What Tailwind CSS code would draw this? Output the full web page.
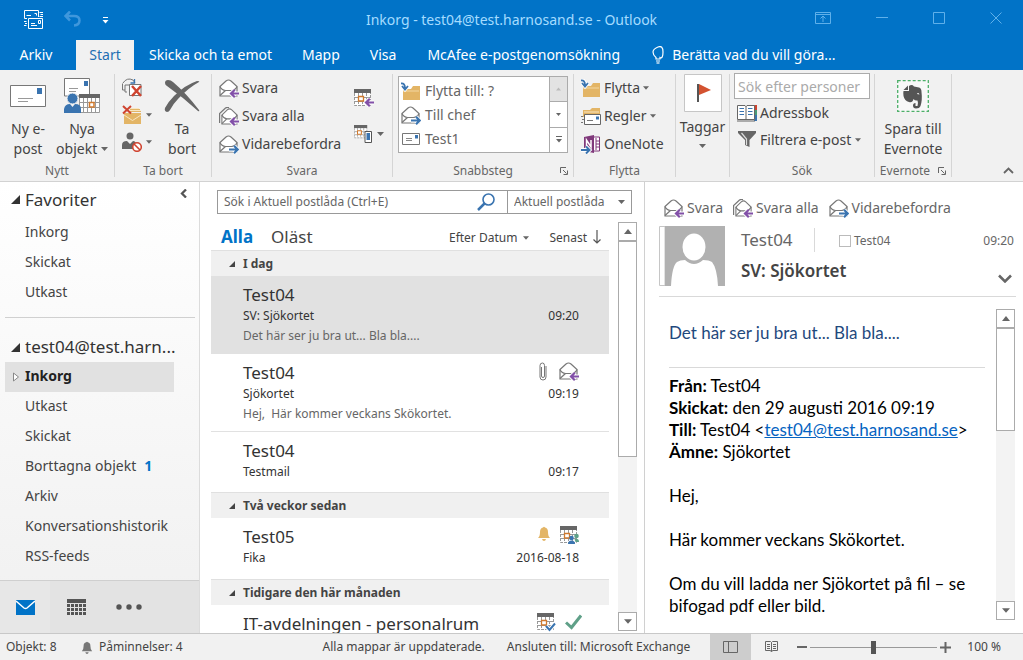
<!DOCTYPE html>
<html lang="sv">
<head>
<meta charset="utf-8">
<title>Inkorg - Outlook</title>
<script src="https://cdn.jsdelivr.net/npm/@tailwindcss/browser@4"></script>
</head>
<body class="h-screen overflow-hidden flex flex-col bg-white text-[#444] font-['Noto_Sans','Open_Sans',sans-serif] text-[14px] leading-5">
<svg class="hidden" xmlns="http://www.w3.org/2000/svg">
  <symbol id="open-mail" viewBox="0 0 20 19"><path d="M1 7.500 7 2Q9.500 0 12 2L18 7.500V17H1Z" fill="#fff" stroke="#777" stroke-width="1.200"/><path d="M1 7.500Q2.500 11 6.500 11.500H12.500Q16.500 11 18 7.500M1 16.500 6.500 11.500" fill="none" stroke="#777" stroke-width="1.200"/></symbol>
  <symbol id="arrow-l" viewBox="0 0 20 19"><path d="M20 14.500H12.500M15.500 10.800 12 14.500 15.500 18.200" fill="none" stroke="#fff" stroke-width="4"/><path d="M20 14.500H12.500M15.800 10.800 12 14.500 15.800 18.200" fill="none" stroke="#8250a8" stroke-width="2.200"/></symbol>
  <symbol id="reply" viewBox="0 0 20 19"><use href="#open-mail" width="20" height="19"/><use href="#arrow-l" width="20" height="19"/></symbol>
  <symbol id="reply-all" viewBox="0 0 20 19"><path d="M.6 16V6.500L6.500 1Q8 0 10 .6" fill="none" stroke="#777" stroke-width="1.200"/><svg x="2" y="1" width="17" height="17" viewBox="0 0 19 18" preserveAspectRatio="none"><use href="#open-mail" width="20" height="19"/></svg><use href="#arrow-l" width="20" height="19"/></symbol>
  <symbol id="forward" viewBox="0 0 20 19"><use href="#open-mail" width="20" height="19"/><path d="M10 14.500H18M15 10.800 18.700 14.500 15 18.200" fill="none" stroke="#fff" stroke-width="4"/><path d="M10 14.500H18M15 10.800 18.700 14.500 15 18.200" fill="none" stroke="#3a74b0" stroke-width="2.200"/></symbol>
  <symbol id="cal" viewBox="0 0 18 18"><path d="M.5 3.500H16.500V16.500H.5Z" fill="#fff"/><path d="M.5 4V16.500H16.500V4M4.500 4V16M8.500 4V16M12.500 4V16M1 8.500H16M1 12.500H16" fill="none" stroke="#999" stroke-width="1" stroke-dasharray="3 1"/><path d="M0 0H17V4H0Z" fill="#666"/><path d="M4.500 7.500H9.500V12H4.500Z" fill="#fff" stroke="#d07a2e" stroke-width="1.300"/></symbol>
  <symbol id="folder-move" viewBox="0 0 20 19"><path d="M2 7H10L12 4H19V18H2Z" fill="#e3b566"/><path d="M2 9H18" stroke="#f3d7a2"/><path d="M0 1Q4 1 4 5M1 4 4 7.500 7 4" fill="none" stroke="#fff" stroke-width="3.500"/><path d="M0 1.500Q4 1 4 6M1 4 4 7.500 7 4" fill="none" stroke="#3a74b0" stroke-width="1.800"/></symbol>
  <symbol id="down" viewBox="0 0 7 4"><path d="M0 0H7L3.500 4Z" fill="#666"/></symbol>
  <symbol id="up" viewBox="0 0 8 5"><path d="M0 5H8L4 0Z" fill="currentColor"/></symbol>
  <symbol id="tri" viewBox="0 0 9 9"><path d="M9 0V9H0Z" fill="currentColor"/></symbol>
  <symbol id="launcher" viewBox="0 0 8 8"><path d="M.5 6V.5H6M3 3 6.500 6.500M7.500 3.500V7.500H3.500" fill="none" stroke="#666"/></symbol>
  <symbol id="bell" viewBox="0 0 14 15"><path d="M1 12Q3 10.500 3 6Q3 2 6 1.500Q7 0 8 1.500Q11 2 11 6Q11 10.500 13 12ZM5 13H9Q8.500 15 7 15T5 13Z" fill="currentColor"/></symbol>
</svg>

<header class="bg-[#0173c7] text-white shrink-0">
  <div class="h-10 grid grid-cols-[1fr_auto_1fr] items-center">
    <div class="flex items-center pl-6 gap-5">
      <button aria-label="Skicka och ta emot alla"><svg class="w-5 h-5" viewBox="0 0 20 20" fill="none" stroke="#fff"><path d="M3 8.500H.5V.5H14.500V7M10.500 3.500H12.500V5.500M2.500 5.500H7M15.500 2.500H19M16.500 4.500H19M15.500 6.500H19M4.500 8.500H18.500V18.500H4.500ZM7 13.500H11M7 15.500H13M14.500 10.500H16.500V13.500H14.500ZM0 11.500H2.500M1 13.500H3M0 15.500H2.500"/></svg></button>
      <button aria-label="Ångra"><svg class="w-[18px] h-[18px]" viewBox="0 0 18 18" fill="none" stroke="#3f97dc" stroke-width="2.500"><path d="M6 .5 1.500 5 6 9.500M2 5H10Q15.500 5 15.500 9.500T10 14.500"/></svg></button>
      <button aria-label="Anpassa verktygsfältet"><svg class="w-[7px] h-[7px]" viewBox="0 0 7 7"><path d="M1 .5H6" stroke="#fff"/><path d="M.5 3H6.500L3.500 6.500Z" fill="#fff"/></svg></button>
    </div>
    <h1 class="text-[14px] text-[#a5dcff]">Inkorg - test04@test.harnosand.se - Outlook</h1>
    <div class="flex items-center justify-end gap-[45px] pr-[21px] -mt-1">
      <button aria-label="Menyfliksalternativ"><svg class="w-4 h-3 block" viewBox="0 0 16 12" fill="none" stroke="#5fb0ea"><path d="M.5 .5H15.500V11.500H.5ZM.5 2.500H15.500M8 10V4.500M5.500 6.500 8 4 10.500 6.500"/></svg></button>
      <button aria-label="Minimera"><svg class="w-3 h-3 block" viewBox="0 0 12 12"><path d="M0 5.500H12" stroke="#5fb0ea"/></svg></button>
      <button aria-label="Maximera"><svg class="w-3 h-3 block" viewBox="0 0 12 12"><path d="M.5 .5H11.500V11.500H.5Z" fill="none" stroke="#5fb0ea"/></svg></button>
      <button aria-label="Stäng"><svg class="w-3 h-3 block" viewBox="0 0 12 12"><path d="M.5 .5 11.500 11.500M11.500 .5 .5 11.500" stroke="#5fb0ea"/></svg></button>
    </div>
  </div>
  <nav class="h-[30px] flex items-stretch text-[14px]">
    <button class="w-[76px] pr-1">Arkiv</button>
    <button class="w-[58px] bg-[#f1f1f1] text-[#1e6fb3]">Start</button>
    <button class="px-[15px]">Skicka och ta emot</button>
    <button class="px-[15px]">Mapp</button>
    <button class="px-[15px]">Visa</button>
    <button class="px-4">McAfee e-postgenomsökning</button>
    <button class="px-4 flex items-center gap-2"><svg class="w-3 h-[18px]" viewBox="0 0 12 18" fill="none" stroke="#fff" stroke-width="1.200"><path d="M4 13V11.500Q1 9 1 6T6 1T11 6T8 11.500V13ZM4 15H8"/><path d="M4.500 17H7.500"/></svg>Berätta vad du vill göra...</button>
  </nav>
</header>

<section aria-label="Menyfliksområde" class="h-[112px] shrink-0 bg-[#f1f1f1] border-b border-[#d2d2d2] flex py-1 text-[14px] [&>div]:border-r [&>div]:border-[#d5d5d5] [&>div]:flex [&>div]:flex-col [&>div]:shrink-0 [&_h2]:text-[12px] [&_h2]:leading-3 [&_h2]:text-[#666] [&_h2]:mt-auto [&_h2]:text-center">
  <div class="w-[115px]">
    <div class="flex">
      <button class="w-14 flex flex-col items-center"><svg class="w-9 h-10" viewBox="0 0 36 40"><path d="M.5 11.500H35.500V32.500H.5Z" fill="#fff" stroke="#777"/><path d="M27 14H32V20H27Z" fill="#3a74b0"/><path d="M8 24.500H23M8 27.500H18" stroke="#999"/></svg><span class="mt-[5px]">Ny e-<br>post</span></button>
      <button class="w-[52px] flex flex-col items-center"><svg class="w-9 h-10" viewBox="0 0 36 40"><path d="M.5 4.500H25.500V22H.5Z" fill="#fff" stroke="#777"/><path d="M20 7H24V12H20Z" fill="#3a74b0"/><path d="M5 14.500H14M5 17.500H12" stroke="#999"/><path d="M15 20H35.500V38.500H15Z" fill="#fff"/><path d="M15.500 24V38.500H35.500V24M19.500 24V38M23.500 24V38M27.500 24V38M31.500 24V38M16 28.500H35M16 33.500H35" fill="none" stroke="#999"/><path d="M15 20H36V24H15Z" fill="#666"/><path d="M25.500 28.500H30V33H25.500Z" fill="#fff" stroke="#d07a2e" stroke-width="1.500"/><circle cx="8.500" cy="24.500" r="5.500" fill="#3a74b0" stroke="#f1f1f1"/><path d="M0 39V35Q1 30 6 30L8.500 33 11 30Q17 30 17 35V39Z" fill="#3a74b0"/></svg><span class="mt-[5px] whitespace-nowrap">Nya<br>objekt <svg class="inline w-[7px] h-1 mb-0.5"><use href="#down"/></svg></span></button>
    </div>
    <h2>Nytt</h2>
  </div>
  <div class="w-[97px]">
    <div class="flex pl-[7px]">
      <div class="flex flex-col w-8">
        <button aria-label="Ignorera" class="h-[27px]"><svg class="w-5 h-5" viewBox="0 0 20 20" fill="none"><path d="M3 12H.5V5.500M5 14H3V7H8M1 5Q5-1 11 2L13 5" stroke="#777"/><path d="M12.500 1V5H8.500" stroke="#3a74b0" stroke-width="1.300"/><path d="M7.500 6.500H19V17.500H7.500Z" fill="#fff" stroke="#777"/><path d="M10 8 19 18M19 8 10 18" stroke="#cf4430" stroke-width="2.500"/></svg></button>
        <button aria-label="Rensa" class="h-[27px] flex items-center gap-1"><svg class="w-5 h-5" viewBox="0 0 20 20"><path d="M2 8H19V19H2Z" fill="#e3b566"/><path d="M2 10 10.500 15.500 19 10M8 5.500H18.500M8 3.500H17" fill="none" stroke="#f8e6c3"/><path d="M8 4.500H18M8 6.500H19" stroke="#e3b566"/><path d="M1 1 9 8.500M9 1 1 8.500" stroke="#cf4430" stroke-width="2"/></svg><svg class="w-[6px] h-1"><use href="#down"/></svg></button>
        <button aria-label="Skräppost" class="h-[27px] flex items-center gap-1"><svg class="w-5 h-5" viewBox="0 0 20 20"><circle cx="8" cy="4" r="3.500" fill="#666"/><path d="M0 17V13Q0 9 5 9L8 12 11 9Q14 9 14 13V17Z" fill="#666"/><circle cx="15" cy="15" r="4.300" fill="#fff" stroke="#cf4430" stroke-width="1.600"/><path d="M12 12 18 18" stroke="#cf4430" stroke-width="1.600"/></svg><svg class="w-[6px] h-1"><use href="#down"/></svg></button>
      </div>
      <button class="w-[56px] flex flex-col items-center"><svg class="w-9 h-10" viewBox="0 0 36 40"><path d="M1 9Q1 6 4 6Q7 6 9 8Q22 19 35 36Q36 38 34 37Q20 24 3 12Q1 11 1 9Z" fill="#666"/><path d="M35 8Q24 14 14 25Q9 30 6 36Q5 38 3 38Q0 37 1 34Q4 28 10 22Q21 11 33 7Q36 7 35 8Z" fill="#666"/></svg><span class="mt-[5px]">Ta<br>bort</span></button>
    </div>
    <h2>Ta bort</h2>
  </div>
  <div class="w-[181px]">
    <div class="flex pl-[7px] text-[14px]">
      <div class="flex flex-col w-[135px] [&>button]:h-7 [&>button]:flex [&>button]:items-center [&>button]:gap-[3px]">
        <button><svg class="w-5 h-[19px]"><use href="#reply"/></svg>Svara</button>
        <button><svg class="w-5 h-[19px]"><use href="#reply-all"/></svg>Svara alla</button>
        <button><svg class="w-5 h-[19px]"><use href="#forward"/></svg>Vidarebefordra</button>
      </div>
      <div class="flex flex-col gap-[18px] pt-[15px]">
        <button aria-label="Möte"><svg class="w-5 h-[18px] block" viewBox="0 0 20 18"><use href="#cal" width="18" height="18"/><svg y="-1" width="20" height="19"><use href="#arrow-l"/></svg></svg></button>
        <button aria-label="Mer" class="flex items-center gap-[3px]"><svg class="w-5 h-[18px]" viewBox="0 0 20 18"><svg width="14" height="14"><use href="#cal"/></svg><path d="M11 6.500H17.500V17.500H11Z" fill="#fff" stroke="#555"/><path d="M12.500 8H16V15H12.500Z" fill="#3a74b0"/></svg><svg class="w-[7px] h-1"><use href="#down"/></svg></button>
      </div>
    </div>
    <h2>Svara</h2>
  </div>
  <div class="w-[181px]">
    <div class="mx-[5px] mt-[2px] h-[77px] border border-[#ababab] bg-white flex">
      <div class="grow flex flex-col [&>button]:h-6 [&>button]:flex [&>button]:items-center [&>button]:gap-1 pl-[2px] pt-[2px] text-[#666]">
        <button><svg class="w-5 h-[19px]"><use href="#folder-move"/></svg>Flytta till: ?</button>
        <button><svg class="w-5 h-[19px]"><use href="#forward"/></svg>Till chef</button>
        <button><svg class="w-5 h-[19px]" viewBox="0 0 20 19"><path d="M1.500 3.500H18.500V14.500H1.500Z" fill="#fff" stroke="#777"/><path d="M14 5H17V8.500H14Z" fill="#3a74b0"/><path d="M5 8.500H11M5 10.500H11" stroke="#888"/></svg>Test1</button>
      </div>
      <div class="w-[18px] border-l border-[#ababab] flex flex-col [&>button]:flex-1 [&>button]:flex [&>button]:items-center [&>button]:justify-center divide-y divide-[#ababab]">
        <button aria-label="Upp" class="bg-[#e3e3e3] text-[#bbb]"><svg class="w-[5px] h-1"><use href="#up"/></svg></button>
        <button aria-label="Ned"><svg class="w-[5px] h-[3px]"><use href="#down"/></svg></button>
        <button aria-label="Fler"><svg class="w-[6px] h-[7px]" viewBox="0 0 6 7"><path d="M0 .5H6" stroke="#666"/><path d="M0 3H6L3 6.500Z" fill="#666"/></svg></button>
      </div>
    </div>
    <div class="mt-auto grid grid-cols-[1fr_auto_1fr] items-center"><h2 class="col-start-2">Snabbsteg</h2><button aria-label="Öppna Snabbsteg" class="justify-self-end pr-[5px]"><svg class="w-2 h-2 block"><use href="#launcher"/></svg></button></div>
  </div>
  <div class="w-[102px]">
    <div class="flex flex-col pl-[7px] [&>button]:h-7 [&>button]:flex [&>button]:items-center [&>button]:gap-[3px]">
      <button><svg class="w-5 h-[19px]"><use href="#folder-move"/></svg>Flytta <svg class="w-[6px] h-1"><use href="#down"/></svg></button>
      <button><svg class="w-5 h-[19px]" viewBox="0 0 20 19"><path d="M2 3H9L11 1H19V10H2Z" fill="#e3b566"/><path d="M3 5H18" stroke="#f8e6c3"/><path d="M3.500 7.500H19.500V17.500H3.500Z" fill="#fff" stroke="#666"/><path d="M15 9.500H18V12.500H15Z" fill="#3a74b0"/><path d="M6 13.500H12M0 9.500H2M1 12.500H3M0 15.500H2" stroke="#777"/></svg>Regler <svg class="w-[6px] h-1"><use href="#down"/></svg></button>
      <button><svg class="w-5 h-[19px]" viewBox="0 0 20 19"><path d="M11 2H18.500V16H11Z" fill="#fff" stroke="#80397b"/><path d="M15 3V15M15 6H18M15 9H18M15 12H18" stroke="#80397b"/><path d="M3 2 13 0V18L3 16Z" fill="#80397b"/><path d="M5.500 12V5L10 12V5" fill="none" stroke="#fff" stroke-width="1.500"/><path d="M0 15H7M5 11.500 8.500 15 5 18.500" fill="none" stroke="#fff" stroke-width="4"/><path d="M0 15H8M5 11.500 8.500 15 5 18.500" fill="none" stroke="#3a74b0" stroke-width="2"/></svg>OneNote</button>
    </div>
    <h2>Flytta</h2>
  </div>
  <div class="w-[54px] items-center">
    <button class="flex flex-col items-center"><svg class="w-[38px] h-[38px]" viewBox="0 0 38 38"><path d="M.5 .5H37.500V37.500H.5Z" fill="#fff" stroke="#c6c6c6"/><path d="M14 10V28" stroke="#555" stroke-width="2"/><path d="M15 10 27 16 15 21Z" fill="#d35230"/></svg><span class="mt-[5px]">Taggar</span><svg class="w-[7px] h-1 mt-[7px]"><use href="#down"/></svg></button>
  </div>
  <div class="w-[145px]">
    <div class="flex flex-col px-1 -mt-px">
      <input aria-label="Sök efter personer" placeholder="Sök efter personer" class="w-full h-[26px] border border-[#ababab] bg-white px-[3px] placeholder:text-[#aaa]">
      <button class="h-[27px] flex items-center gap-[3px] pl-[3px]"><svg class="w-5 h-[18px]" viewBox="0 0 20 18"><path d="M17 1H20V6H17Z" fill="#cf4430"/><path d="M17 6H20V11H17Z" fill="#4a9a78"/><path d="M17 11H20V17H17Z" fill="#3a74b0"/><path d="M.5 1.500H8L9 2.500 10 1.500H17.500V15.500H.5Z" fill="#fff" stroke="#666"/><path d="M9 2V16M0 17H18" stroke="#666"/><path d="M2.500 4.500H7M2.500 7.500H7M2.500 10.500H7M11 4.500H15.500M11 7.500H15.500M11 10.500H15.500" stroke="#3a74b0"/></svg>Adressbok</button>
      <button class="h-[27px] flex items-center gap-1 pl-1"><svg class="w-[18px] h-[17px]" viewBox="0 0 18 17"><path d="M0 0H18V2L11.500 9V16L7 14V9L0 2Z" fill="#666"/><path d="M3.500 2 8.500 8V14" fill="none" stroke="#ddd" stroke-width="1.200"/></svg>Filtrera e-post <svg class="w-[6px] h-1"><use href="#down"/></svg></button>
    </div>
    <h2>Sök</h2>
  </div>
  <div class="w-[77px]">
    <button class="flex flex-col items-center"><svg class="w-8 h-10" viewBox="0 0 32 40"><path d="M.7 6.700H31.300V37.300H.7Z" fill="#f8f8f8" stroke="#4caf68" stroke-width="1.300" stroke-dasharray="3 2"/><path d="M6.500 16 11 11.500V16ZM12 12Q15 10 17 12.500L22 13.500Q24.500 14 24.500 18Q25.500 26 23.500 32Q22.500 34.500 19 34.500Q16 34.500 16 31.500Q16 29 18.500 29V32H20.500Q21.500 29 20.500 26.500Q18 27 16.500 25Q15.500 29 12 28Q7.500 27 6.500 22Q6 19 6.500 17H12Z" fill="#555"/><path d="M20 20Q21 18 22.500 20.500Z" fill="#fff"/></svg><span class="mt-[5px]">Spara till<br>Evernote</span></button>
    <div class="mt-auto flex items-center justify-center gap-2"><h2>Evernote</h2><button aria-label="Öppna Evernote"><svg class="w-2 h-2 block"><use href="#launcher"/></svg></button></div>
  </div>
  <button aria-label="Dölj menyfliksområdet" class="ml-auto self-end mr-[9px] mb-[3px]"><svg class="w-[11px] h-[7px] block" viewBox="0 0 11 7"><path d="M1 6 5.500 1.500 10 6" fill="none" stroke="#666" stroke-width="1.800"/></svg></button>
</section>

<main class="flex grow min-h-0">
  <aside class="w-[200px] shrink-0 flex flex-col bg-linear-to-b from-white to-[#f0f0f0] border-r border-[#dcdcdc]">
    <div class="h-[35px] flex items-center pl-[11px] gap-[5px] text-[17px] text-[#333]"><svg class="w-[9px] h-[9px]"><use href="#tri"/></svg><h2>Favoriter</h2><button aria-label="Minimera mapprutan" class="ml-auto mr-3 -mt-3"><svg class="w-[7px] h-[9px] block" viewBox="0 0 7 9"><path d="M6 .5 2 4.500 6 8.500" fill="none" stroke="#555" stroke-width="2.300"/></svg></button></div>
    <ul class="[&_a]:h-[30px] [&_a]:flex [&_a]:items-center [&_a]:pl-[25px]">
      <li><a href="#">Inkorg</a></li><li><a href="#">Skickat</a></li><li><a href="#">Utkast</a></li>
    </ul>
    <hr class="mt-[10px] mb-[14px] ml-[5px] mr-1 border-[#d0d0d0]">
    <div class="h-[30px] flex items-center pl-[11px] gap-[5px] text-[17px] text-[#333]"><svg class="w-[9px] h-[9px]"><use href="#tri"/></svg><h2>test04@test.harn...</h2></div>
    <ul class="[&_a]:h-[30px] [&_a]:flex [&_a]:items-center [&_a]:pl-[25px] [&_a]:pb-0.5">
      <li class="ml-[5px] mr-[25px] bg-[#e1e1e1] text-[#222] font-bold flex items-center pl-2 gap-[6px]"><svg class="w-[6px] h-[10px]" viewBox="0 0 6 10"><path d="M.5 1V9L5.500 5Z" fill="#fff" stroke="#888"/></svg><a href="#" class="!pl-0">Inkorg</a></li>
      <li><a href="#">Utkast</a></li><li><a href="#">Skickat</a></li>
      <li><a href="#" class="gap-2">Borttagna objekt <b class="text-[#0173c7]">1</b></a></li>
      <li><a href="#">Arkiv</a></li><li><a href="#">Konversationshistorik</a></li><li><a href="#">RSS-feeds</a></li>
    </ul>
    <nav class="mt-auto h-[53px] bg-[#e3e3e3] border-t border-[#cfcfcf] flex items-center [&>button]:h-full [&>button]:flex [&>button]:items-center [&>button]:justify-center">
      <button aria-label="E-post" class="w-[50px] bg-[#e7e7e7]"><svg class="w-[19px] h-[15px]" viewBox="0 0 19 15"><path d="M0 0H19V15H0Z" fill="#0173c7"/><path d="M0 1 8 8Q9.500 9 11 8L19 1" fill="none" stroke="#fff" stroke-width="1.500"/></svg></button>
      <button aria-label="Kalender" class="w-[52px]"><svg class="w-[19px] h-4" viewBox="0 0 19 16"><path d="M0 0H19V4H0Z" fill="#555"/><path d="M0 6.500H19M0 10.500H19M0 14.500H19" stroke="#555" stroke-width="3" stroke-dasharray="3 1"/></svg></button>
      <button aria-label="Mer" class="w-[54px]"><svg class="w-[26px] h-[6px]" viewBox="0 0 26 6" fill="#555"><circle cx="3" cy="3" r="2.700"/><circle cx="13" cy="3" r="2.700"/><circle cx="23" cy="3" r="2.700"/></svg></button>
    </nav>
  </aside>

  <section aria-label="Meddelandelista" class="w-[445px] shrink-0 flex flex-col border-r border-[#d0d0d0] pl-[11px]">
    <div class="mt-2 ml-[6px] mr-3 h-6 border border-[#999] flex text-[12px] text-[#666]">
      <input aria-label="Sök i Aktuell postlåda" placeholder="Sök i Aktuell postlåda (Ctrl+E)" class="grow min-w-0 px-[6px] placeholder:text-[#666]">
      <button aria-label="Sök" class="pr-3"><svg class="w-[18px] h-[18px] block" viewBox="0 0 18 18" fill="none" stroke="#3a74b0"><circle cx="11.500" cy="6.500" r="5.500" stroke-width="1.600"/><path d="M7.500 10.500 1 17" stroke-width="2.500"/></svg></button>
      <div class="grid w-[124px] border-l border-[#999] items-center"><select aria-label="Sökområde" class="appearance-none pl-[6px] w-full row-start-1 col-start-1"><option>Aktuell postlåda</option></select><svg class="w-[7px] h-1 row-start-1 col-start-1 justify-self-end mr-[6px] pointer-events-none"><use href="#down"/></svg></div>
    </div>
    <div class="flex grow min-h-0 pt-2">
      <div class="grow min-w-0 flex flex-col">
        <div class="h-7 shrink-0 flex items-center pl-[10px] pt-0.5 text-[12px]">
          <button class="text-[17px] font-bold text-[#0173c7]">Alla</button>
          <button class="text-[17px] ml-[18px]">Oläst</button>
          <button class="ml-auto flex items-center gap-[6px] pt-0.5">Efter Datum <svg class="w-[6px] h-1"><use href="#down"/></svg></button>
          <button class="ml-5 mr-2 flex items-center gap-[6px]"><span class="pt-0.5">Senast</span> <svg class="w-2 h-[14px]" viewBox="0 0 8 14"><path d="M4 0V13M.5 9.500 4 13 7.500 9.500" fill="none" stroke="#555" stroke-width="1.200"/></svg></button>
        </div>
        <div class="overflow-hidden grow text-[12px] leading-5 text-[#333] [&_h3]:h-[26px] [&_h3]:bg-[#f0f0f0] [&_h3]:border-t [&_h3]:border-[#e0e0e0] [&_h3]:pl-[18px] [&_h3]:pt-0.5 [&_h3]:flex [&_h3]:items-center [&_h3]:gap-2 [&_h3]:font-bold [&_h3]:text-[#444] [&_article]:pl-8 [&_article]:pr-[30px] [&_article]:pt-2 [&_h4]:text-[17px] [&_h4]:leading-[22px]">
          <h3><svg class="w-[6px] h-[6px]"><use href="#tri"/></svg>I dag</h3>
          <article class="bg-[#e1e1e1] h-[78px]"><h4>Test04</h4><p class="flex justify-between"><span>SV: Sjökortet</span><time>09:20</time></p><p class="text-[#666]">Det här ser ju bra ut... Bla bla....</p></article>
          <article class="h-[78px] border-b border-[#e1e1e1]"><div class="flex items-start"><h4 class="grow">Test04</h4><svg class="w-2 h-[19px] mr-3" viewBox="0 0 8 19"><path d="M2.500 5V14Q2.500 15.500 4 15.500T5.500 14V3.500Q5.500 1 3.500 1Q1 1 1 3.500V15Q1 18 4 18T7 15V4" fill="none" stroke="#777"/></svg><svg class="w-5 h-[19px]"><use href="#reply"/></svg></div><p class="flex justify-between"><span>Sjökortet</span><time>09:19</time></p><p class="text-[#666]">Hej,&nbsp; Här kommer veckans Skökortet.</p></article>
          <article class="h-[60px]"><h4>Test04</h4><p class="flex justify-between"><span>Testmail</span><time>09:17</time></p></article>
          <h3><svg class="w-[6px] h-[6px]"><use href="#tri"/></svg>Två veckor sedan</h3>
          <article class="h-[61px]"><div class="flex items-start"><h4 class="grow">Test05</h4><svg class="w-[14px] h-[15px] mr-[9px] text-[#e3b566]"><use href="#bell"/></svg><svg class="w-[19px] h-[18px]" viewBox="0 0 19 18"><use href="#cal" width="18" height="18"/><circle cx="11.500" cy="12" r="2.300" fill="#3a74b0"/><path d="M8 18Q8 14.500 11.500 14.500T15 18Z" fill="#3a74b0"/><circle cx="16.500" cy="10" r="2.300" fill="#5fa088"/><path d="M14.500 13Q19 12 19 16H15.500Z" fill="#5fa088"/></svg></div><p class="flex justify-between"><span>Fika</span><time>2016-08-18</time></p></article>
          <h3><svg class="w-[6px] h-[6px]"><use href="#tri"/></svg>Tidigare den här månaden</h3>
          <article><div class="flex items-start"><h4 class="grow">IT-avdelningen - personalrum</h4><svg class="w-[19px] h-[19px] mr-[9px]" viewBox="0 0 19 19"><use href="#cal" width="18" height="18"/><path d="M9 13 12.500 17 18 10.500" fill="none" stroke="#fff" stroke-width="4"/><path d="M9 13 12.500 17 18 10.500" fill="none" stroke="#3a74b0" stroke-width="2"/></svg><svg class="w-[17px] h-4 mt-px -mr-[3px]" viewBox="0 0 17 16"><path d="M1 8.500 6.500 13.500 16 1.500" fill="none" stroke="#5fa088" stroke-width="3"/></svg></div></article>
        </div>
      </div>
      <div aria-hidden="true" class="w-[19px] ml-[9px] mr-[7px] mb-0.5 bg-[#f3f3f3] flex flex-col text-[#666]">
        <div class="h-[19px] border border-[#ababab] bg-white flex items-center justify-center"><svg class="w-2 h-[5px]"><use href="#up"/></svg></div>
        <div class="h-[216px] border border-[#ababab] bg-white"></div>
        <div class="mt-auto h-[19px] border border-[#ababab] bg-white flex items-center justify-center"><svg class="w-2 h-[5px]"><use href="#down"/></svg></div>
      </div>
    </div>
  </section>

  <section aria-label="Läsfönster" class="grow min-w-0 flex flex-col pl-[14px] pr-[7px] pt-4">
    <div class="flex gap-[10px] pl-[5px] h-5 [&>button]:flex [&>button]:items-center [&>button]:gap-[3px] text-[#666]">
      <button><svg class="w-5 h-[19px]"><use href="#reply"/></svg>Svara</button>
      <button><svg class="w-5 h-[19px]"><use href="#reply-all"/></svg>Svara alla</button>
      <button><svg class="w-5 h-[19px]"><use href="#forward"/></svg>Vidarebefordra</button>
    </div>
    <div class="flex mt-2 pb-[10px] border-b border-[#d9d9d9]">
      <svg class="w-[66px] h-[60px] shrink-0" viewBox="0 0 66 60"><path d="M.5 .5H6V59.500H.5Z" fill="#fff" stroke="#c6c6c6"/><path d="M6 0H66V60H6Z" fill="#b1b1b1"/><ellipse cx="35" cy="21" rx="11.500" ry="13.500" fill="#fff"/><path d="M12 60Q13 40 18 36Q21 34 26 34Q35 42 44 34Q50 34 53 36Q58 42 59 60Z" fill="#fff"/></svg>
      <div class="grow pl-4">
        <div class="flex items-center h-7 text-[12px] text-[#666]"><span class="text-[17px] w-[73px]">Test04</span><span class="h-6 border-l border-[#d9d9d9] mr-6"></span><label class="flex items-center gap-[3px] pt-0.5"><input type="checkbox" class="appearance-none size-3 border border-[#bbb] bg-white">Test04</label><time class="ml-auto mr-0.5 pt-0.5">09:20</time></div>
        <div class="flex items-center mt-1"><h2 class="text-[17px] font-semibold grow">SV: Sjökortet</h2><button aria-label="Visa mer" class="mt-4 mr-1"><svg class="w-[14px] h-[9px] block" viewBox="0 0 14 9"><path d="M1 1.500 7 7.500 13 1.500" fill="none" stroke="#666" stroke-width="2.500"/></svg></button></div>
      </div>
    </div>
    <div class="flex grow min-h-0 mt-3">
      <div class="grow pl-[10px] pt-[13px] pr-[11px] overflow-hidden text-black font-['Lato','Open_Sans',sans-serif] text-[17px] leading-[22px] [&>p+p]:mt-[22px]">
        <p class="text-[#1f497d]">Det här ser ju bra ut... Bla bla....</p>
        <hr class="mt-[23px] mb-[7px] border-[#d9d9d9]">
        <p><b>Från:</b> Test04<br><b>Skickat:</b> den 29 augusti 2016 09:19<br><b>Till:</b> Test04 &lt;<a href="#" class="text-[#0563c1] underline">test04@test.harnosand.se</a>&gt;<br><b>Ämne:</b> Sjökortet</p>
        <p>Hej,</p>
        <p>Här kommer veckans Skökortet.</p>
        <p>Om du vill ladda ner Sjökortet på fil – se<br>bifogad pdf eller bild.</p>
      </div>
      <div aria-hidden="true" class="w-[19px] shrink-0 mb-[13px] mr-px bg-[#f3f3f3] flex flex-col text-[#666]">
        <div class="h-[19px] border border-[#ababab] bg-white flex items-center justify-center"><svg class="w-2 h-[5px]"><use href="#up"/></svg></div>
        <div class="h-[103px] border border-[#ababab] bg-white"></div>
        <div class="mt-auto h-[19px] border border-[#ababab] bg-white flex items-center justify-center"><svg class="w-2 h-[5px]"><use href="#down"/></svg></div>
      </div>
    </div>
  </section>
</main>

<footer class="h-[27px] shrink-0 bg-[#f1f1f1] border-t border-[#c8c8c8] flex items-center text-[12px] pl-[6px]">
  <span class="w-[75px]">Objekt: 8</span>
  <svg class="w-3 h-[13px] mr-[6px] text-[#777]"><use href="#bell"/></svg><span>Påminnelser: 4</span>
  <span class="ml-auto">Alla mappar är uppdaterade.</span>
  <span class="ml-[22px]">Ansluten till: Microsoft Exchange</span>
  <button aria-label="Normal vy" class="ml-5 w-[41px] h-full bg-[#cdcdcd] flex items-center justify-center"><svg class="w-[15px] h-3" viewBox="0 0 15 12"><path d="M.5 .5H14.500V11.500H.5ZM5.500 1V11" fill="none" stroke="#666"/></svg></button>
  <button aria-label="Läsvy" class="w-10 h-full flex items-center justify-center"><svg class="w-[13px] h-3" viewBox="0 0 13 12" fill="none" stroke="#666"><path d="M.5 .5H5.500L6.500 1.500 7.500 .5H12.500V9.500H7.500L6.500 11 5.500 9.500H.5ZM6.500 1.500V10M2 3.500H5M2 5.500H5M2 7.500H5M8 3.500H11M8 5.500H11M8 7.500H11"/></svg></button>
  <button aria-label="Zooma ut" class="ml-[6px]"><svg class="w-[10px] h-[10px] block" viewBox="0 0 10 10"><path d="M0 5H10" stroke="#666" stroke-width="2"/></svg></button>
  <input type="range" aria-label="Zoom" class="appearance-none mx-[3px] w-[127px] h-4 bg-transparent [&::-webkit-slider-runnable-track]:h-px [&::-webkit-slider-runnable-track]:bg-[#999] [&::-webkit-slider-thumb]:appearance-none [&::-webkit-slider-thumb]:w-[5px] [&::-webkit-slider-thumb]:h-[13px] [&::-webkit-slider-thumb]:-mt-[6px] [&::-webkit-slider-thumb]:bg-[#555]">
  <button aria-label="Zooma in"><svg class="w-[11px] h-[11px] block" viewBox="0 0 11 11"><path d="M0 5.500H11M5.500 0V11" stroke="#666" stroke-width="2"/></svg></button>
  <button class="ml-4 mr-[22px]">100 %</button>
</footer>
</body>
</html>
